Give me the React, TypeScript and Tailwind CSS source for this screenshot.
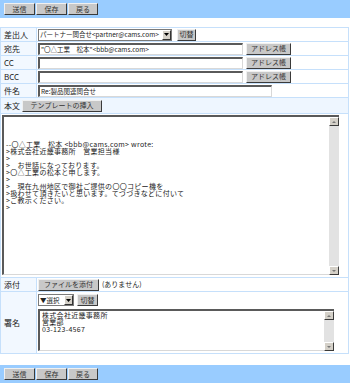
import React from "react";

const F = { fontFamily: '"Noto Sans CJK JP", "Noto Sans", sans-serif' };

function Btn({ children, w }: { children: React.ReactNode; w: string }) {
  return (
    <div
      className={`${w} h-[12px] shrink-0 flex items-center justify-center bg-[#c8c8c8] border border-t-[#f0f0f0] border-l-[#f0f0f0] border-r-[#3a3a3a] border-b-[#3a3a3a] text-[7px] leading-none text-[#333] whitespace-nowrap`}
    >
      {children}
    </div>
  );
}

function Input({ w, text }: { w: string; text?: string }) {
  return (
    <div
      className={`${w} h-[12px] shrink-0 bg-white border-t-2 border-l-2 border-r border-b border-t-[#5a5a5a] border-l-[#5a5a5a] border-r-[#d8d8d8] border-b-[#d8d8d8] flex items-center pl-[1px] text-[6.5px] leading-none text-[#222] whitespace-nowrap overflow-hidden`}
    >
      {text}
    </div>
  );
}

function Select({ w, text }: { w: string; text: string }) {
  return (
    <div
      className={`${w} h-[12px] shrink-0 bg-white border border-[#7a7a7a] flex items-center text-[6.5px] leading-none text-[#222] whitespace-nowrap`}
    >
      <span className="flex-1 pl-[1px]">{text}</span>
      <span className="w-[9px] h-[10px] shrink-0 bg-[#d4d0c8] border border-t-white border-l-white border-r-[#333] border-b-[#333] flex items-center justify-center">
        <svg width="5" height="3" viewBox="0 0 5 3">
          <path d="M0 0H5L2.5 3Z" fill="#000" />
        </svg>
      </span>
    </div>
  );
}

function ScrollBar({ h }: { h: string }) {
  return (
    <div className={`w-[10px] ${h} shrink-0 bg-[#e2e2e2] flex flex-col justify-between`}>
      <div className="w-[10px] h-[9px] bg-[#d4d0c8] border border-t-white border-l-white border-r-[#3a3a3a] border-b-[#3a3a3a] flex items-center justify-center">
        <svg width="4" height="2" viewBox="0 0 4 2">
          <path d="M0 2H4L2 0Z" fill="#777" />
        </svg>
      </div>
      <div className="w-[10px] h-[9px] bg-[#d4d0c8] border border-t-white border-l-white border-r-[#3a3a3a] border-b-[#3a3a3a] flex items-center justify-center">
        <svg width="4" height="2" viewBox="0 0 4 2">
          <path d="M0 0H4L2 2Z" fill="#777" />
        </svg>
      </div>
    </div>
  );
}

function Bar() {
  return (
    <div className="h-[18px] bg-[#99ccff] flex items-center pl-[4px] gap-[1px]">
      <Btn w="w-[31px]">送信</Btn>
      <Btn w="w-[31px]">保存</Btn>
      <Btn w="w-[30px]">戻る</Btn>
    </div>
  );
}

function Row({ label, children, h = "h-[14px]" }: { label: string; children: React.ReactNode; h?: string }) {
  return (
    <div className={`flex ${h} border-b border-[#c6e0fb]`}>
      <div className="w-[36px] shrink-0 border-r border-[#c6e0fb] bg-[#f2f8ff] pl-[3px] flex items-center text-[8px] text-[#222]">
        {label}
      </div>
      <div className="flex-1 flex items-center pl-[1px] gap-[5px] bg-white">{children}</div>
    </div>
  );
}

const body = [
  "",
  "",
  "",
  "--〇△工業　松本 <bbb@cams.com> wrote:",
  ">株式会社近畿事務所　営業担当様",
  ">",
  ">　お世話になっております。",
  ">〇△工業の松本と申します。",
  ">",
  ">　現在九州地区で御社ご提供の〇〇コピー機を",
  ">扱わせて頂きたいと思います。てづづきなどに付いて",
  ">ご教示ください。",
  ">",
];

export default function App() {
  return (
    <div className="w-[350px] h-[390px] bg-white overflow-hidden" style={F}>
      <Bar />
      <div className="mt-[9px] w-[349px] border border-[#c6e0fb]">
        <Row label="差出人">
          <Select w="w-[134px]" text="パートナー問合せ<partner@cams.com>" />
          <Btn w="w-[19px]">切替</Btn>
        </Row>
        <Row label="宛先">
          <Input w="w-[205px]" text={'"〇△工業　松本"<bbb@cams.com>'} />
          <div className="ml-[-2px]">
            <Btn w="w-[45px]">アドレス帳</Btn>
          </div>
        </Row>
        <Row label="CC">
          <Input w="w-[205px]" />
          <div className="ml-[-2px]">
            <Btn w="w-[45px]">アドレス帳</Btn>
          </div>
        </Row>
        <Row label="BCC">
          <Input w="w-[205px]" />
          <div className="ml-[-2px]">
            <Btn w="w-[45px]">アドレス帳</Btn>
          </div>
        </Row>
        <Row label="件名">
          <Input w="w-[234px]" text="Re:製品関連問合せ" />
        </Row>
        <div className="h-[16px] border-b border-[#c6e0fb] bg-[#eef6ff] flex items-center pl-[3px] gap-[2px]">
          <span className="text-[8px] text-[#222]">本文</span>
          <Btn w="w-[80px]">テンプレートの挿入</Btn>
        </div>
        <div className="h-[164px] border-b border-[#c6e0fb] bg-white pl-[1px] pt-[1px]">
          <div className="w-[337px] h-[160px] flex border-t-2 border-l-2 border-t-[#5a5a5a] border-l-[#5a5a5a] border-b border-b-[#d8d8d8] bg-white">
            <div className="flex-1 pl-[2px] pt-[3px] text-[7px] tracking-[0.3px] leading-[7px] text-[#222] whitespace-pre overflow-hidden">
              {body.map((l, i) => (
                <div key={i} className="h-[7px] leading-[7px]">
                  {l}
                </div>
              ))}
            </div>
            <ScrollBar h="h-[158px]" />
          </div>
        </div>
        <Row label="添付">
          <Btn w="w-[61px]">ファイルを添付</Btn>
          <span className="ml-[-2px] text-[7px] text-[#222]">(ありません)</span>
        </Row>
        <div className="flex h-[61px]">
          <div className="w-[36px] shrink-0 border-r border-[#c6e0fb] bg-[#f2f8ff] pl-[3px] flex items-center text-[8px] text-[#222]">
            署名
          </div>
          <div className="flex-1 pl-[1px] pt-[2px] bg-white">
            <div className="flex items-center gap-[3px]">
              <Select w="w-[36px]" text="▼選択" />
              <Btn w="w-[21px]">切替</Btn>
            </div>
            <div className="mt-[3px] w-[296px] h-[42px] flex border-t-2 border-l-2 border-t-[#5a5a5a] border-l-[#5a5a5a] border-b border-b-[#d8d8d8] bg-white">
              <div className="flex-1 pl-[2px] pt-[1px] text-[7px] tracking-[0.3px] leading-[7px] text-[#222] whitespace-pre">
                <div className="h-[7px] leading-[7px]">株式会社近畿事務所</div>
                <div className="h-[7px] leading-[7px]">営業部</div>
                <div className="h-[7px] leading-[7px]">03-123-4567</div>
              </div>
              <ScrollBar h="h-[40px]" />
            </div>
          </div>
        </div>
      </div>
      <div className="mt-[11px]">
        <Bar />
      </div>
    </div>
  );
}
